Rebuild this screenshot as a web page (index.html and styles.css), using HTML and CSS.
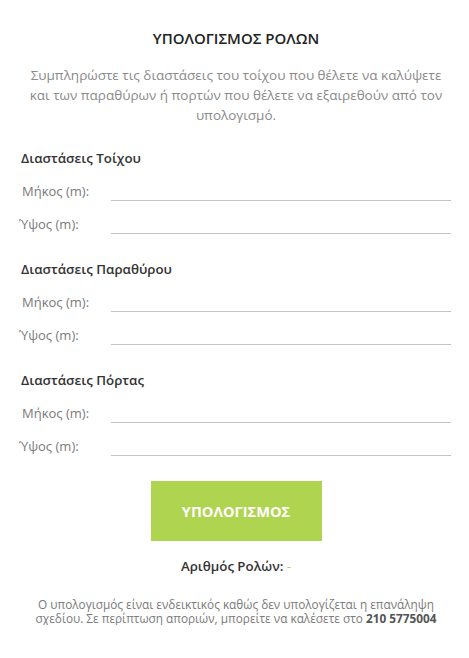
FILE: index.html
```html
<!DOCTYPE html>
<html lang="el">
<head>
<meta charset="utf-8">
<title>Υπολογισμός Ρολών</title>
<link rel="stylesheet" href="styles.css">
</head>
<body>
<div class="calc">
  <h1 class="title">ΥΠΟΛΟΓΙΣΜΟΣ ΡΟΛΩΝ</h1>
  <p class="intro">Συμπληρώστε τις διαστάσεις του τοίχου που θέλετε να καλύψετε και των παραθύρων ή πορτών που θέλετε να εξαιρεθούν από τον υπολογισμό.</p>

  <section class="group">
    <h2 class="group-title">Διαστάσεις Τοίχου</h2>
    <div class="row"><label class="label">Μήκος (m):</label><input class="field" type="text"></div>
    <div class="row"><label class="label label-tonos">Ύψος (m):</label><input class="field" type="text"></div>
  </section>

  <section class="group">
    <h2 class="group-title">Διαστάσεις Παραθύρου</h2>
    <div class="row"><label class="label">Μήκος (m):</label><input class="field" type="text"></div>
    <div class="row"><label class="label label-tonos">Ύψος (m):</label><input class="field" type="text"></div>
  </section>

  <section class="group">
    <h2 class="group-title">Διαστάσεις Πόρτας</h2>
    <div class="row"><label class="label">Μήκος (m):</label><input class="field" type="text"></div>
    <div class="row"><label class="label label-tonos">Ύψος (m):</label><input class="field" type="text"></div>
  </section>

  <div class="actions"><button class="btn" type="button">ΥΠΟΛΟΓΙΣΜΟΣ</button></div>

  <p class="result">Αριθμός Ρολών: <span class="result-value">-</span></p>

  <p class="note">Ο υπολογισμός είναι ενδεικτικός καθώς δεν υπολογίζεται η επανάληψη σχεδίου. Σε περίπτωση αποριών, μπορείτε να καλέσετε στο <strong>210&nbsp;5775004</strong></p>
</div>
</body>
</html>
```

FILE: styles.css
```css
* { box-sizing: border-box; }
html, body { margin: 0; padding: 0; background: #fff; }
body {
  font-family: "Open Sans", "Noto Sans", sans-serif;
  color: #333;
}
.calc {
  padding: 28px 18px 0 21px;
}
.title {
  margin: 0;
  text-align: center;
  font-size: 15px;
  line-height: 20px;
  font-weight: 600;
  color: #222;
}
.intro {
  margin: 17px 0 0;
  text-align: center;
  font-size: 13.5px;
  line-height: 20px;
  color: #8a8a8a;
}
.group { margin-top: 23px; }
.group + .group { margin-top: 25px; }
.group-title {
  margin: 0 0 7px;
  font-size: 13.3px;
  line-height: 20px;
  font-weight: 600;
  color: #333;
}
.row {
  display: grid;
  grid-template-columns: 90px 1fr;
  align-items: end;
  height: 26px;
}
.row + .row { margin-top: 7px; }
.label {
  font-size: 13px;
  line-height: 20px;
  color: #7a7a7a;
  padding-left: 1px;
}
.label-tonos { margin-left: -3px; }
.field {
  height: 26px;
  border: 0;
  border-bottom: 1px solid #c4c4c4;
  outline: none;
  padding: 0;
  background: transparent;
  font: inherit;
}
.actions {
  display: flex;
  justify-content: center;
  margin-top: 25px;
}
.btn {
  width: 171px;
  height: 60px;
  border: 0;
  background: #afd44f;
  color: #fff;
  font-family: inherit;
  font-size: 14.6px;
  font-weight: 700;
  cursor: pointer;
}
.result {
  margin: 15px 0 0;
  text-align: center;
  font-size: 13.3px;
  line-height: 20px;
  font-weight: 600;
  color: #333;
}
.result-value { color: #afd44f; font-weight: 400; }
.note {
  margin: 21px 0 0;
  text-align: center;
  font-size: 11.8px;
  line-height: 14px;
  color: #7a7a7a;
}
.note strong { color: #555; font-weight: 700; }
```
